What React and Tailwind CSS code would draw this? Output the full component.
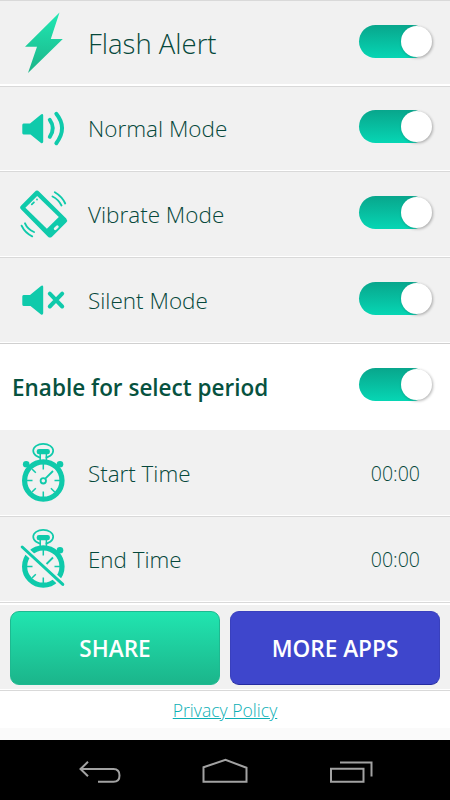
import React from "react";

const TEAL = "#0fcaab";

function Toggle() {
  return (
    <div className="mr-[21px] flex h-[33px] w-[70px] shrink-0 items-center justify-end rounded-full bg-linear-to-b from-[#08a68c] to-[#06d6b4]">
      <div className="-mr-[3px] size-[31px] shrink-0 rounded-full bg-white shadow-[1px_1px_3px_rgba(0,0,0,0.3)]" />
    </div>
  );
}

function Row({ icon, label, labelClass, height, children }) {
  return (
    <div className={`flex w-full items-center border-t border-[#d9d9d9] border-b border-b-white bg-[#f1f1f1] ${height}`}>
      <div className="w-[88px] shrink-0">{icon}</div>
      <div className={`flex-1 whitespace-nowrap font-light text-[#06483b] ${labelClass}`}>{label}</div>
      {children}
    </div>
  );
}

function Bolt() {
  return (
    <svg className="block" width="88" height="84" viewBox="0 1 88 84">
      <defs>
        <linearGradient id="bolt" x1="0" y1="0" x2="0" y2="1">
          <stop offset="0" stopColor="#20e8b3" />
          <stop offset="1" stopColor="#1bb488" />
        </linearGradient>
      </defs>
      <path d="M59.5 12.5 25 46.8H37L28 73 62.8 39H50.8Z" fill="url(#bolt)" />
    </svg>
  );
}

function SpeakerBody() {
  return (
    <path
      d="M23.5 122.5H30L41 113.4Q43 112.5 43.2 114.3V140.8Q43 142.8 41 142L30.5 133.4H23.5Q22.3 133.4 22.3 132V124Q22.3 122.5 23.5 122.5Z"
      fill={TEAL}
    />
  );
}

function SpeakerOn() {
  return (
    <svg className="block" width="88" height="82" viewBox="0 87 88 82">
      <SpeakerBody />
      <g fill="none" stroke={TEAL} strokeWidth="3.9" strokeLinecap="round">
        <path d="M49.8 118.8Q55.8 127 49.8 135.8" />
        <path d="M56.3 112.8Q67.8 127 56.3 142.2" />
      </g>
    </svg>
  );
}

function SpeakerOff() {
  return (
    <svg className="block" width="88" height="82" viewBox="0 86.5 88 82">
      <SpeakerBody />
      <path d="M49.8 121.2 62.2 134M62.2 121.2 49.8 134" fill="none" stroke={TEAL} strokeWidth="4" strokeLinecap="round" />
    </svg>
  );
}

function Phone() {
  return (
    <svg className="block" width="88" height="82" viewBox="0 172.5 88 82">
      <path
        d="M34.8 191.2Q37 189 39.2 191.2L66.2 218Q68 220 66.2 222L52 236.2Q50 238 48 236.2L21.2 209Q19 207 21.2 205Z"
        fill={TEAL}
      />
      <path d="M37.2 195.4 58.8 216.4 46.9 228.2 25.4 207.2Z" fill="#f1f1f1" />
      <path d="M31.8 203.8 33.9 201.8" stroke={TEAL} strokeWidth="1.8" strokeLinecap="round" />
      <circle cx="37" cy="199" r=".9" fill={TEAL} />
      <path d="M55.2 228.3 57.3 226.2" stroke="#f1f1f1" strokeWidth="2.8" strokeLinecap="round" />
      <g fill="none" stroke={TEAL} strokeWidth="1.9" strokeLinecap="round">
        <path d="M54.8 191.8Q62 196 65.2 203" />
        <path d="M52.5 196Q58.5 199 61.5 205" />
        <path d="M25 222.8Q27.5 228.5 34 231.5" />
        <path d="M21.6 225.2Q25 232.5 32.2 235.8" />
      </g>
    </svg>
  );
}

function Stopwatch({ off }) {
  return (
    <svg className="block" width="88" height="84" viewBox="0 431 88 84">
      <ellipse cx="43.2" cy="450.8" rx="10" ry="6.9" fill="none" stroke={TEAL} strokeWidth="1.7" />
      <rect x="36.7" y="449" width="13.2" height="5.2" rx="2.3" fill={TEAL} />
      <path d="M41 455H45.6V461H41Z" fill="#f1f1f1" />
      <path d="M40.2 454V461.5M46.4 454V461.5" stroke={TEAL} strokeWidth="1.5" />
      <circle cx="43.3" cy="480.5" r="18.7" fill="none" stroke={TEAL} strokeWidth="5.2" />
      {!off && <circle cx="26.2" cy="464.2" r="3.3" fill={TEAL} />}
      <circle cx="60" cy="464.2" r="3.3" fill={TEAL} />
      <g fill="none" stroke={TEAL} strokeWidth="1.5">
        <path d="M43.3 464V469.5M43.3 491.5V497M27 480.5H32.5M54.5 480.5H60M32 492 35.8 488.2" />
        {!off && <path d="M32 469 35.8 472.8M54.7 492 50.9 488.2" />}
        <path d={off ? "M46.5 478 53 471.5" : "M45.5 478.3 53 471"} strokeWidth="1.8" />
        {!off && <circle cx="43.3" cy="480.8" r="2.7" strokeWidth="1.8" />}
      </g>
      {off && (
        <g fill="none" strokeLinecap="round">
          <path d="M22.2 461 62.8 498.4" stroke="#f1f1f1" strokeWidth="6.8" />
          <path d="M22.2 461 62.8 498.4" stroke={TEAL} strokeWidth="3" />
        </g>
      )}
    </svg>
  );
}

export default function App() {
  return (
    <div className="flex h-[800px] w-[450px] flex-col overflow-hidden bg-white font-['Open_Sans',sans-serif]">
      <Row icon={<Bolt />} label="Flash Alert" labelClass="text-[27.5px] pt-[3px]" height="h-[85px]">
        <div className="-mt-[2px]"><Toggle /></div>
      </Row>
      <div className="h-px bg-white" />
      <Row icon={<SpeakerOn />} label="Normal Mode" labelClass="text-[22.5px]" height="h-[85px]">
        <div className="-mt-[5px]"><Toggle /></div>
      </Row>
      <Row icon={<Phone />} label="Vibrate Mode" labelClass="text-[22.5px] pt-[2px]" height="h-[86px]">
        <div className="-mt-[3px]"><Toggle /></div>
      </Row>
      <Row icon={<SpeakerOff />} label="Silent Mode" labelClass="text-[22.5px] pt-[2px]" height="h-[86px]">
        <div className="-mt-[3px]"><Toggle /></div>
      </Row>
      <div className="flex h-[87px] items-center border-t border-[#d0d0d0] pl-[12px]">
        <div className="pt-[2px] flex-1 whitespace-nowrap text-[22.5px] font-semibold text-[#07523f]">Enable for select period</div>
        <div className="-mt-[5px]"><Toggle /></div>
      </div>
      <div className="flex h-[86px] items-center border-b border-white bg-[#f1f1f1]">
        <div className="w-[88px] shrink-0"><Stopwatch /></div>
        <div className="flex-1 pt-[2px] text-[22.4px] font-light text-[#06483b]">Start Time</div>
        <div className="mr-[30px] pt-[2px] text-[19.5px] font-light text-[#06483b]">00:00</div>
      </div>
      <Row icon={<Stopwatch off />} label="End Time" labelClass="text-[22.4px] pt-[2px]" height="h-[86px]">
        <div className="mr-[30px] pt-[2px] text-[19.5px] font-light text-[#06483b]">00:00</div>
      </Row>
      <div className="h-[89px] border-y border-[#d9d9d9] bg-white pt-[2px] pb-px">
        <div className="flex h-[84px] gap-[10px] bg-[#f1f1f1] px-[10px] pt-[6px] pb-[5px]">
          <button className="h-[74px] flex-1 rounded-[9px] border border-[#1eb990] bg-linear-to-b from-[#21e5b0] to-[#1bb58b] pt-[2px] text-[22.6px] font-semibold text-white">SHARE</button>
          <button className="h-[74px] flex-1 rounded-[9px] border border-[#3940bd] border-b-[#252ca0] bg-[#3e46cc] pt-[2px] text-[22.6px] font-semibold text-white">MORE APPS</button>
        </div>
      </div>
      <div className="h-[37px] pt-[6px] text-center text-[17.6px] font-light">
        <a className="text-[#0cafb5] underline">Privacy Policy</a>
      </div>
      <div className="h-[12px] bg-[#fafafa]" />
      <div className="h-[60px] bg-black">
        <svg className="block" width="450" height="60" viewBox="0 740 450 60" fill="none" stroke="#a2a2a2" strokeWidth="2">
          <path d="M88 761.8 80.5 769 88 776.3M81 769H113.5Q119.5 769 119.5 775.5 119.5 781.8 113.5 781.8H98" />
          <path d="M203.5 781.8V767.3L225.5 759.8 246.5 767.8V781.8Z" />
          <path d="M331 768.8H363.5V781.8H331ZM340 762.5H371.5V776.5" />
        </svg>
      </div>
    </div>
  );
}
